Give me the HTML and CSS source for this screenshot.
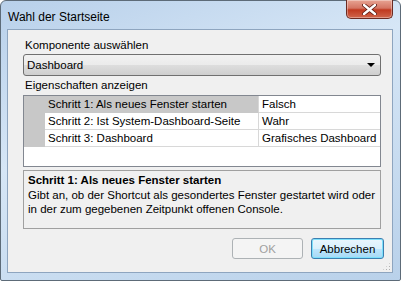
FILE: index.html
```html
<!DOCTYPE html>
<html>

<head>
    <meta charset="utf-8">
    <title>Wahl der Startseite</title>
    <link rel="stylesheet" href="styles.css">
</head>

<body>

    <div class="window">

        <div class="titlebar">
            <span class="title">Wahl der Startseite</span>
            <div class="close">
                <svg width="15" height="11" viewBox="0 0 15 11">
                    <path d="M2 1 L13 10 M13 1 L2 10" stroke="#5a1a12" stroke-width="4" stroke-linecap="round"/>
                    <path d="M2 1 L13 10 M13 1 L2 10" stroke="#fff" stroke-width="2.4" stroke-linecap="round"/>
                </svg>
            </div>
        </div>

        <div class="client">

            <p class="label">Komponente auswählen</p>
            <div class="combo">
                <span>Dashboard</span>
                <span class="arrow"></span>
            </div>

            <p class="label">Eigenschaften anzeigen</p>
            <div class="grid">
                <div class="row">
                    <div class="head"></div>
                    <div class="name selected">Schritt 1: Als neues Fenster starten</div>
                    <div class="value">Falsch</div>
                </div>
                <div class="row">
                    <div class="head"></div>
                    <div class="name">Schritt 2: Ist System-Dashboard-Seite</div>
                    <div class="value">Wahr</div>
                </div>
                <div class="row">
                    <div class="head"></div>
                    <div class="name">Schritt 3: Dashboard</div>
                    <div class="value">Grafisches Dashboard</div>
                </div>
            </div>

            <div class="desc">
                <p class="desc-title">Schritt 1: Als neues Fenster starten</p>
                <p class="desc-text">Gibt an, ob der Shortcut als gesondertes Fenster gestartet wird oder in der zum gegebenen Zeitpunkt offenen Console.</p>
            </div>

            <div class="buttons">
                <button class="btn" disabled>OK</button>
                <button class="btn default">Abbrechen</button>
            </div>

            <div class="grip"></div>

        </div>

    </div>

</body>

</html>
```

FILE: styles.css
```css
* {
    box-sizing: border-box;
}

body {
    margin: 0;
    background: #fff;
    font-family: "Liberation Sans", Arial, sans-serif;
    font-size: 11.5px;
    color: #000;
}

p {
    margin: 0;
    padding: 0;
}

.window {
    width: 401px;
    height: 281px;
    border: 1px solid #5d6b78;
    border-radius: 6px 6px 2px 2px;
    background: linear-gradient(160deg, #b8d0ea 0%, #d6e6f6 40%, #c8dcf0 70%, #b9d1ea 100%);
    padding: 0 7px 7px 6px;
    display: flex;
    flex-direction: column;
}

.titlebar {
    height: 28px;
    display: flex;
    justify-content: space-between;
    align-items: flex-start;
}

.title {
    font-size: 12px;
    margin: 9px 0 0 1px;
    color: #000;
}

.close {
    width: 47px;
    height: 19px;
    margin-top: -1px;
    border: 1px solid #6b2b22;
    border-top: none;
    border-radius: 0 0 5px 5px;
    background: linear-gradient(#e8a493 0%, #d47563 45%, #c0391f 55%, #d0664c 100%);
    display: flex;
    justify-content: center;
    align-items: center;
    box-shadow: inset 0 0 0 1px rgba(255, 255, 255, 0.35);
}

.client {
    flex: 1;
    position: relative;
    background: #f0f0f0;
    border: 1px solid #8ea5bf;
    padding: 7px 11px 0 15px;
    display: flex;
    flex-direction: column;
}

.label {
    height: 16px;
    line-height: 16px;
    padding-left: 2px;
}

.combo {
    height: 22px;
    margin-top: 1px;
    border: 1px solid #707070;
    border-radius: 3px;
    background: linear-gradient(#f2f2f2 0%, #ebebeb 50%, #dddddd 51%, #cfcfcf 100%);
    display: flex;
    justify-content: space-between;
    align-items: center;
    padding: 0 5px 0 3px;
    margin-bottom: 1px;
}

.arrow {
    width: 0;
    height: 0;
    border-left: 4px solid transparent;
    border-right: 4px solid transparent;
    border-top: 4px solid #000;
}

.grid {
    height: 72px;
    margin-top: 2px;
    border: 1px solid #828790;
    background: #fff;
}

.row {
    display: flex;
    height: 17px;
    line-height: 16px;
}

.head {
    width: 21px;
    background: #c8c8c8;
}

.name {
    width: 214px;
    padding-left: 3px;
    border-bottom: 1px solid #d8d8d8;
    border-right: 1px solid #d8d8d8;
    white-space: nowrap;
}

.name.selected {
    background: #c8c8c8;
    border-bottom-color: #c8c8c8;
}

.value {
    flex: 1;
    padding-left: 3px;
    border-bottom: 1px solid #d8d8d8;
}

.desc {
    height: 59px;
    margin-top: 3px;
    border: 1px solid #a0a0a0;
    padding: 1px 4px;
}

.desc-title {
    font-weight: bold;
    line-height: 16px;
}

.desc-text {
    line-height: 14px;
}

.buttons {
    display: flex;
    justify-content: flex-end;
    gap: 8px;
    margin-top: 9px;
    margin-right: -3px;
}

.btn {
    height: 21px;
    font-family: "Liberation Sans", Arial, sans-serif;
    font-size: 11.5px;
    border-radius: 3px;
    padding: 0;
}

.btn[disabled] {
    width: 71px;
    border: 1px solid #adb2b5;
    background: #f4f4f4;
    color: #a0a0a0;
}

.btn.default {
    width: 73px;
    border: 1px solid #3c7fb1;
    background: linear-gradient(#eaf6fd 0%, #d9f0fc 50%, #bee6fd 51%, #a7d9f5 100%);
    box-shadow: inset 0 0 0 1px #7ce0fb;
    color: #000;
}

.grip {
    position: absolute;
    right: 1px;
    bottom: 1px;
    width: 9px;
    height: 9px;
    background-image: radial-gradient(circle, #b0b0b0 0.8px, transparent 1px);
    background-size: 3px 3px;
    clip-path: polygon(100% 0, 100% 100%, 0 100%);
}
```
